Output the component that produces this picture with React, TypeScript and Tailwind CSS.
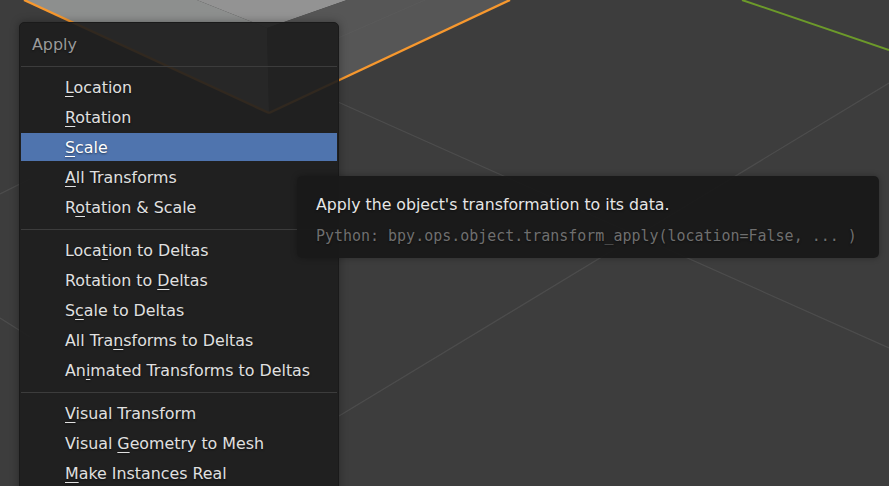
const groups = [
  [
    { pre: '', key: 'L', post: 'ocation' },
    { pre: '', key: 'R', post: 'otation' },
    { pre: '', key: 'S', post: 'cale', active: true },
    { pre: '', key: 'A', post: 'll Transforms' },
    { pre: 'R', key: 'o', post: 'tation & Scale' },
  ],
  [
    { pre: 'Loca', key: 't', post: 'ion to Deltas' },
    { pre: 'Rotation to ', key: 'D', post: 'eltas' },
    { pre: 'S', key: 'c', post: 'ale to Deltas' },
    { pre: 'All Tra', key: 'n', post: 'sforms to Deltas' },
    { pre: 'An', key: 'i', post: 'mated Transforms to Deltas' },
  ],
  [
    { pre: '', key: 'V', post: 'isual Transform' },
    { pre: 'Visual ', key: 'G', post: 'eometry to Mesh' },
    { pre: '', key: 'M', post: 'ake Instances Real' },
  ],
];

function Viewport() {
  return (
    <svg className="absolute inset-0" width="889" height="486" viewBox="0 0 889 486" fill="none">
      {/* cube faces */}
      <polygon points="24,0 197,0 267,28 269,113" fill="#8d8f8e" />
      <polygon points="197,0 347,0 267,28" fill="#939393" />
      <polygon points="267,28 347,0 510,0 269,113" fill="#565656" />
      <line x1="338" y1="38" x2="425" y2="0" stroke="#5a5a5a" strokeWidth="1" />
      {/* floor grid */}
      <g stroke="#4d4d4d" strokeWidth="1.2">
        <line x1="338" y1="102" x2="889" y2="348" />
        <line x1="889" y1="83" x2="339" y2="416" />
        <line x1="0" y1="194" x2="30" y2="179" />
        <line x1="0" y1="318" x2="30" y2="337" />
      </g>
      <line x1="742" y1="0" x2="889" y2="50" stroke="#6c9a2a" strokeWidth="2" />
      <line x1="24" y1="0" x2="269" y2="113" stroke="#f7982e" strokeWidth="2.4" />
      <line x1="269" y1="113" x2="510" y2="0" stroke="#f7982e" strokeWidth="2.4" />
    </svg>
  );
}

export default function App() {
  return (
    <div className="relative w-[889px] h-[486px] overflow-hidden bg-[#3d3d3d] font-['DejaVu_Sans',sans-serif] [text-shadow:0_1px_2px_rgba(0,0,0,0.5)]">
      <Viewport />

      <div className="absolute left-[19px] top-[22px] w-[320px] h-[480px] rounded-[5px] bg-[#1e1e1e]/[0.915] border border-[#1a1a1a] shadow-[0_0_8px_rgba(0,0,0,0.35)] px-px">
        <div className="h-[44px] pl-[11px] pt-3 text-[15.9px] leading-5 text-[#9a9a9a] border-b border-[#3c3c3c]">Apply</div>
        {groups.map((items, i) => (
          <div key={i} className={i === 0 ? 'pt-[5px] pb-[7px]' : 'pt-[5px] pb-[7px] border-t border-[#3c3c3c]'}>
            {items.map(item => (
              <div key={item.pre + item.key + item.post} className="h-[30px] flex items-center">
                <div
                  className={`w-full h-[28px] pl-[44px] pt-0.5 flex items-center text-[15.85px] whitespace-pre ${
                    item.active ? 'bg-[#4f74ae] text-white' : 'text-[#e0e0e0]'
                  }`}
                >
                  <span>
                    {item.pre}
                    <span className="underline underline-offset-[3px]">{item.key}</span>
                    {item.post}
                  </span>
                </div>
              </div>
            ))}
          </div>
        ))}
      </div>

      <div className="absolute left-[297px] top-[176px] w-[582px] h-[82px] rounded-[5px] bg-[#191919]/[0.96] shadow-[0_0_6px_rgba(0,0,0,0.3)] pl-[19px] pt-[19px]">
        <div className="text-[15.75px] leading-5 text-[#e6e6e6]">Apply the object's transformation to its data.</div>
        <div className="mt-[11px] text-[14.97px] leading-5 text-[#6f6f6f] font-['DejaVu_Sans_Mono',monospace] whitespace-pre">Python: bpy.ops.object.transform_apply(location=False, ... )</div>
      </div>
    </div>
  );
}
